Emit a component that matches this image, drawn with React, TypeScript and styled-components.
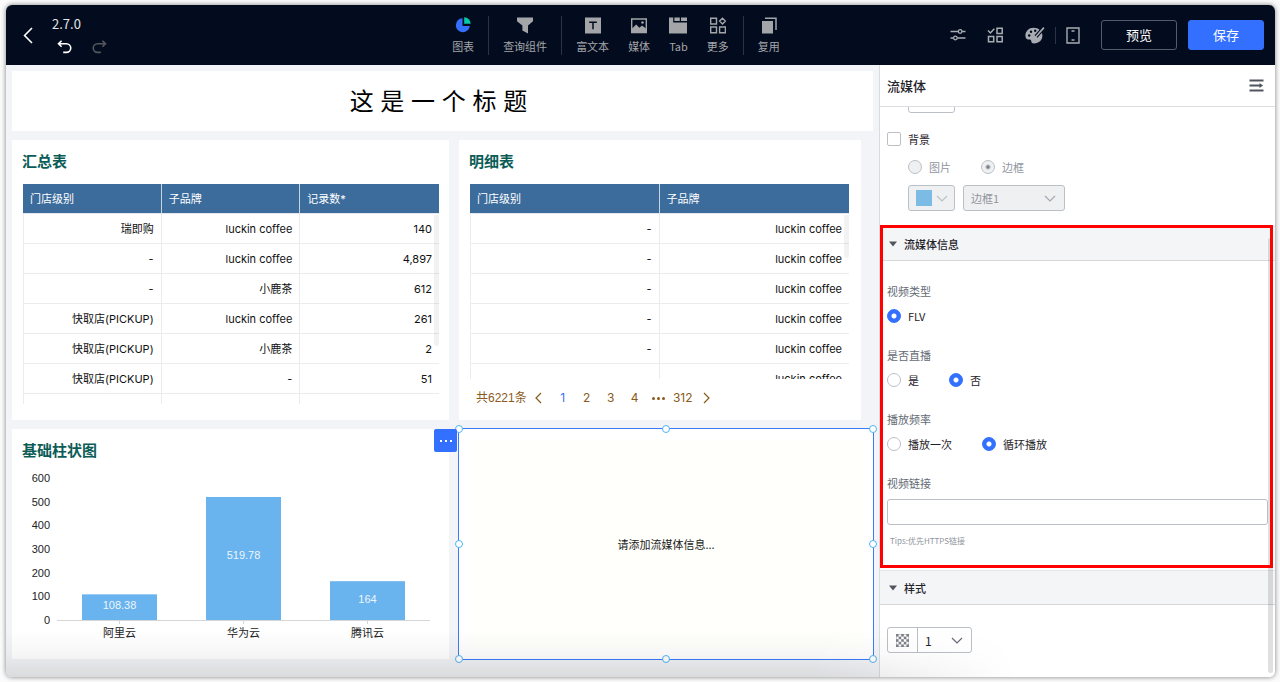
import React from 'react';
import styled, { createGlobalStyle, css } from 'styled-components';

const cjk = '"Noto Sans CJK SC", sans-serif';

const GlobalStyle = createGlobalStyle`
  * { box-sizing: border-box; }
  body { margin: 0; background: #fbfbfb; }
  body, button, input, select { font-family: ${cjk}; }
  button { padding: 0; cursor: pointer; }
`;

/* ---------- window ---------- */

const Page = styled.div`
  height: 100vh;
  min-height: 560px;
  padding: 5px 5px 5px 6px;
`;

const Window = styled.div`
  position: relative;
  display: flex;
  flex-direction: column;
  height: 100%;
  border-radius: 6px;
  overflow: hidden;
  background: #fff;
  box-shadow: 0 0 5px rgba(0, 0, 0, 0.5);

  &::after {
    content: '';
    position: absolute;
    left: 0;
    right: 260px;
    bottom: 0;
    height: 48px;
    pointer-events: none;
    background: linear-gradient(to bottom, transparent, rgba(0, 0, 0, 0.03) 50%, rgba(0, 0, 0, 0.1));
    mask-image: linear-gradient(to right, #000 80%, transparent);
  }
`;

const Body = styled.div`
  flex: 1;
  min-height: 0;
  display: flex;
`;

/* ---------- top bar ---------- */

const TopBar = styled.header`
  flex: none;
  height: 60px;
  padding: 0 11px 0 16px;
  display: grid;
  grid-template-columns: 430fr auto 484fr;
  align-items: center;
  background: #030c1e;
  color: #a3a6ab;
`;

const IconButton = styled.button<{ $color?: string }>`
  display: flex;
  align-items: center;
  justify-content: center;
  border: 0;
  background: none;
  color: ${(p) => p.$color ?? '#a9acb2'};
`;

const TopLeft = styled.div`
  display: flex;
  align-items: center;
  gap: 18px;
`;

const Version = styled.div`
  font-size: 13px;
  line-height: 20px;
  color: #e4e6ea;
`;

const History = styled.div`
  display: flex;
  gap: 20px;
  padding: 6px 5px 2px;
`;

const Tools = styled.nav`
  display: flex;
  align-items: center;
  gap: 14px;
`;

const ToolGroup = styled.div`
  display: flex;
  gap: 19px;
`;

const Tool = styled.button`
  display: flex;
  flex-direction: column;
  align-items: center;
  gap: 4px;
  padding-top: 1px;
  border: 0;
  background: none;
  color: #a3a5a9;
  font-size: 11px;
  line-height: 16px;
`;

const Divider = styled.span<{ $height: number }>`
  width: 1px;
  height: ${(p) => p.$height}px;
  background: #2b3344;
`;

const TopRight = styled.div`
  display: flex;
  align-items: center;
  justify-content: flex-end;
`;

const Utilities = styled.div`
  display: flex;
  align-items: center;
  gap: 21px;
  margin-right: 21px;
`;

const UtilityPair = styled.div`
  display: flex;
  align-items: center;
  gap: 10px;
`;

const ActionButton = styled.button<{ $primary?: boolean }>`
  width: 76px;
  height: 30px;
  margin-left: ${(p) => (p.$primary ? 11 : 0)}px;
  border: 1px solid ${(p) => (p.$primary ? '#3370ff' : '#555c69')};
  border-radius: 3px;
  background: ${(p) => (p.$primary ? '#3370ff' : 'transparent')};
  color: #fff;
  font-size: 13px;
  line-height: 26px;
`;

/* ---------- canvas ---------- */

const Canvas = styled.main`
  flex: 1;
  min-width: 0;
  overflow: hidden;
  padding: 6px;
  background: #f3f4f7;
  display: grid;
  grid-template-columns: 437fr 414fr;
  grid-template-rows: 60px 280px 230px;
  gap: 9px 10px;
`;

const TitleCard = styled.h1`
  grid-column: 1 / -1;
  display: flex;
  align-items: center;
  justify-content: center;
  margin: 0;
  padding: 2px 8px 0 0;
  background: #fff;
  color: #000;
  font: 400 24px/32px Inter, ${cjk};
`;

const Card = styled.section<{ $inset?: boolean }>`
  display: flex;
  flex-direction: column;
  min-width: 0;
  min-height: 0;
  padding: 10px ${(p) => (p.$inset ? 12 : 10)}px 0 10px;
  margin-right: ${(p) => (p.$inset ? 12 : 0)}px;
  background: #fff;
`;

const CardTitle = styled.h2`
  flex: none;
  margin: 0 0 12px;
  color: #0b5c57;
  font: 700 15px/22px ${cjk};
`;

const TableFrame = styled.div<{ $bottom: number; $thumb: number }>`
  position: relative;
  flex: 1;
  min-height: 0;
  overflow: hidden;
  margin: 0 0 ${(p) => p.$bottom}px 1px;

  &::after {
    content: '';
    position: absolute;
    top: 31px;
    right: 0;
    width: 5px;
    height: ${(p) => p.$thumb}px;
    border-radius: 0 0 3px 3px;
    background: rgba(0, 0, 0, 0.05);
  }
`;

const DataTable = styled.table`
  width: 100%;
  table-layout: fixed;
  border-collapse: separate;
  border-spacing: 0;
  font: 400 11px/16px Inter, ${cjk};
  color: #111;

  th {
    height: 30px;
    padding: 0 7px;
    text-align: left;
    font-weight: 400;
    color: #fff;
    background: #3c6c9c;
    background-clip: padding-box;
    border-right: 1px solid #c8d3e0;
    border-bottom: 1px solid #e4e8ee;
  }
  th:last-child { border-right: 0; }

  td {
    height: 30px;
    padding: 0 7px;
    text-align: right;
    border-right: 1px solid #ececee;
    border-bottom: 1px solid #ececee;
  }
  td:first-child { border-left: 1px solid #ececee; }
  td:last-child { border-right: 0; }
`;

const Pagination = styled.nav`
  flex: none;
  display: flex;
  align-items: center;
  padding: 7px 7px 10px;
  color: #8a5a1c;
  font: 400 12px/24px "Liberation Sans", ${cjk};
`;

const PageButton = styled.button<{ $active?: boolean }>`
  display: flex;
  align-items: center;
  justify-content: center;
  min-width: 24px;
  height: 24px;
  border: 0;
  background: none;
  color: ${(p) => (p.$active ? '#3370ff' : '#8a5a1c')};
  font: 400 12px/24px Inter, ${cjk};
`;

const Chart = styled.svg`
  display: block;
  width: 100%;
  margin-top: -11px;
  font-family: "Liberation Sans", ${cjk};
  font-size: 11px;
`;

const MediaCard = styled.section`
  position: relative;
  display: flex;
  padding: 11px;
  background: #fff;
`;

const MediaPlaceholder = styled.p`
  flex: 1;
  display: flex;
  align-items: center;
  justify-content: center;
  margin: 0;
  background: #fffffb;
  color: #1a1a1a;
  font-size: 11px;
`;

const Selection = styled.div`
  position: absolute;
  inset: -1px;
  border: 1px solid #3b7bfb;
`;

const Handle = styled.i<{ $x: number; $y: number }>`
  position: absolute;
  left: ${(p) => p.$x}%;
  top: ${(p) => p.$y}%;
  width: 8px;
  height: 8px;
  margin: -4px;
  border: 1px solid #52b4f2;
  border-radius: 50%;
  background: #fff;
`;

const MoreButton = styled.button`
  position: absolute;
  top: 0;
  right: 100%;
  width: 23px;
  height: 23px;
  margin-right: 2px;
  border: 0;
  border-radius: 2px;
  display: flex;
  align-items: center;
  justify-content: center;
  background: #3370ff;
  color: #fff;
`;

/* ---------- settings panel ---------- */

const Panel = styled.aside`
  position: relative;
  flex: none;
  width: 396px;
  display: flex;
  flex-direction: column;
  border-left: 1px solid #d9dbdf;
  background: #fff;
  color: #1f2329;
  font-size: 11px;
  line-height: 16px;
`;

const PanelHeader = styled.div`
  flex: none;
  height: 42px;
  padding: 0 11px 0 7px;
  display: flex;
  align-items: center;
  justify-content: space-between;
  border-bottom: 1px solid #dcdee1;
`;

const PanelTitle = styled.h2`
  margin: 0;
  font-size: 13px;
  font-weight: 500;
`;

const PanelScroll = styled.div`
  flex: 1;
  min-height: 0;
  overflow: hidden;
`;

const ScrollThumb = styled.div`
  position: absolute;
  top: 173px;
  right: 2px;
  bottom: 4px;
  width: 5px;
  border-radius: 3px;
  background: rgba(0, 0, 0, 0.12);
`;

const ClippedRow = styled.div`
  height: 6px;
  overflow: hidden;
  display: flex;
  align-items: flex-end;
  padding-left: 28px;
`;

const Background = styled.fieldset`
  margin: 0;
  border: 0;
  padding: 18px 7px 15px;
`;

const Nested = styled.div`
  display: flex;
  flex-direction: column;
  gap: 10px;
  padding: 12px 0 0 21px;
`;

const Options = styled.div<{ $gap: number }>`
  display: flex;
  gap: ${(p) => p.$gap}px;
`;

const Option = styled.label<{ $muted?: boolean }>`
  display: flex;
  align-items: center;
  gap: 7px;
  color: ${(p) => (p.$muted ? '#8f959e' : '#1f2329')};
`;

const Check = styled.input`
  appearance: none;
  width: 14px;
  height: 14px;
  margin: 0;
  border: 1px solid #bbbfc6;
  border-radius: 2px;
  background: #fff;
`;

const Radio = styled.input`
  appearance: none;
  width: 14px;
  height: 14px;
  margin: 0;
  border: 1px solid #bbbfc6;
  border-radius: 50%;
  background: #fff;

  &:checked {
    border-color: #3370ff;
    background: radial-gradient(circle, #fff 0 2px, #3370ff 3px);
  }
  &:disabled { background: #eff0f1; border-color: #bbbfc6; }
  &:disabled:checked { background: radial-gradient(circle, #7c828c 0 1px, #eff0f1 3px); }
`;

const boxed = css<{ $muted?: boolean }>`
  height: 26px;
  border: 1px solid #bbbfc6;
  border-radius: 3px;
  background: ${(p) => (p.$muted ? '#eff0f1' : '#fff')};
`;

const ColorButton = styled.button<{ $muted?: boolean }>`
  ${boxed}
  flex: none;
  width: 47px;
  display: flex;
  align-items: center;
  justify-content: center;
  gap: 4px;
  color: #bbbfc6;
`;

const Swatch = styled.span`
  width: 16px;
  height: 16px;
  background: #7cbbe4;
`;

const SelectBox = styled.div<{ $muted?: boolean; $width: number }>`
  ${boxed}
  width: ${(p) => p.$width}px;
  display: flex;
  align-items: center;
  padding-right: 8px;
  color: ${(p) => (p.$muted ? '#a3a8b0' : '#646a73')};
`;

const Select = styled.select<{ $muted?: boolean }>`
  appearance: none;
  flex: 1;
  min-width: 0;
  height: 24px;
  padding: 0 7px;
  border: 0;
  background: transparent;
  color: ${(p) => (p.$muted ? '#8f959e' : '#1f2329')};
  font-size: ${(p) => (p.$muted ? 11 : 12)}px;
  opacity: 1;
`;

const Prefix = styled.span`
  width: 30px;
  height: 24px;
  display: flex;
  align-items: center;
  justify-content: center;
  border-right: 1px solid #bbbfc6;
`;

const Section = styled.section<{ $highlighted?: boolean }>`
  position: relative;
  margin-bottom: 1px;

  ${(p) =>
    p.$highlighted &&
    css`
      &::after {
        content: '';
        position: absolute;
        z-index: 1;
        inset: -1px 2px 1px 0;
        border: 3px solid #ff0000;
        pointer-events: none;
      }
    `}
`;

const SectionTitle = styled.h3`
  margin: 0;
  height: 35px;
  padding: 0 8px;
  display: flex;
  align-items: center;
  gap: 6px;
  border-top: 1px solid #e6e7ea;
  border-bottom: 1px solid #d5d7db;
  background: #f4f5f7;
  font-size: 11px;
  font-weight: 500;
`;

const SectionBody = styled.div`
  padding: 22px 7px 20px;
`;

const Field = styled.div`
  margin-bottom: 23px;
  &:last-child { margin-bottom: 0; }
`;

const FieldLabel = styled.label`
  display: block;
  margin-bottom: 8px;
  color: #646a73;
`;

const RadioField = styled.fieldset`
  margin: 0 0 23px;
  padding: 0;
  border: 0;

  legend {
    padding: 0;
    margin-bottom: 9px;
    color: #646a73;
  }
`;

const TextInput = styled.input`
  ${boxed}
  display: block;
  width: 100%;
  padding: 0 8px;
`;

const Tip = styled.p`
  margin: 8px 3px 0;
  color: #8f959e;
  font-size: 8px;
  line-height: 16px;
`;

/* ---------- drawings ---------- */

const Chevron = ({ d = 'M1 1l5 5 5-5', w = 12, h = 7 }: { d?: string; w?: number; h?: number }) => (
  <svg width={w} height={h} viewBox={`0 0 ${w} ${h}`} fill="none" stroke="currentColor" strokeWidth="1.2" aria-hidden>
    <path d={d} />
  </svg>
);

const BackArrow = () => (
  <svg width="12" height="17" viewBox="0 0 12 17" fill="none" stroke="currentColor" strokeWidth="1.6" aria-hidden>
    <path d="M10 1L2.600 8.500l7.400 7.500" />
  </svg>
);

const Caret = () => (
  <svg width="10" height="6" viewBox="0 0 10 6" aria-hidden>
    <path d="M1 .6h8L5 5.400z" fill="#51565e" />
  </svg>
);

const UndoIcon = ({ flip = false }: { flip?: boolean }) => (
  <svg width="15" height="14" viewBox="0 0 15 14" fill="none" stroke="currentColor" strokeWidth="1.6" aria-hidden>
    <g transform={flip ? 'matrix(-1 0 0 1 15 0)' : undefined}>
      <path d="M4.6 .7L1.500 3.700l3.100 3M2 3.700h7.400a4.300 4.300 0 0 1 0 8.700H6.200" />
    </g>
  </svg>
);

const icons = {
  chart: (
    <>
      <path d="M7.5 1.2A7 7 0 1 0 14.8 9H7.5z" fill="#3370ff" />
      <path d="M9.2.3v6.5h6.5A6.6 6.6 0 0 0 9.2.3z" fill="#04c9a8" />
    </>
  ),
  filter: <path d="M0 .400h16v3.800L11 8.400v8.200l-5.600-3V8.400L0 4.200z" fill="currentColor" />,
  text: (
    <>
      <path d="M0 .500h16v16H0z" fill="currentColor" />
      <path d="M4.200 5.200h7.600M8 5.200v7" stroke="#030c1e" strokeWidth="1.500" />
    </>
  ),
  media: (
    <>
      <path d="M.7 2h14.600v13.600H.7z" fill="none" stroke="currentColor" strokeWidth="1.400" />
      <path d="M1 11.500l4.200-4 3.200 3.200 2.600-2.300 4 3v4.200H1z" fill="currentColor" />
      <circle cx="11.500" cy="5.500" r="1.300" fill="currentColor" />
    </>
  ),
  tab: <path d="M0 .500h4.200v5H18v11H0zM5.400.500h5.400v3.400H5.400zM12 .500h6v3.400h-6z" fill="currentColor" />,
  more: (
    <path
      d="M.7 1.200h5.800V7H.7zM.7 10h5.800v5.800H.7zM9.600 10h5.800v5.800H9.600zM12.500 1.200l2.900 2.900L12.500 7 9.600 4.100z"
      fill="none"
      stroke="currentColor"
      strokeWidth="1.400"
    />
  ),
  reuse: (
    <>
      <path d="M1 4h11v12.500H1z" fill="currentColor" />
      <path d="M4 1.200h11v11.800" fill="none" stroke="currentColor" strokeWidth="1.500" />
    </>
  ),
};

const ToolIcon = ({ name }: { name: keyof typeof icons }) => {
  const w = name === 'tab' ? 18 : 16;
  return (
    <svg width={w} height="17" viewBox={`0 0 ${w} 17`} aria-hidden>
      {icons[name]}
    </svg>
  );
};

const SlidersIcon = () => (
  <svg width="16" height="12" viewBox="0 0 16 12" fill="none" stroke="currentColor" strokeWidth="1.300" aria-hidden>
    <path d="M.5 2.500h7.700M12 2.500h3.500M.5 9h3M7.300 9h8.200" />
    <circle cx="10.100" cy="2.500" r="1.800" />
    <circle cx="5.400" cy="9" r="1.800" />
  </svg>
);

const TasksIcon = () => (
  <svg width="17" height="16" viewBox="0 0 17 16" fill="none" stroke="currentColor" strokeWidth="1.500" aria-hidden>
    <path d="M1 3.500L3.400 6 7.300 1.700M10 1.200h5.200v5.200H10zM1.500 9.500h5.200v5.200H1.500zM10 9.500h5.200v5.200H10z" />
  </svg>
);

const PaletteIcon = () => (
  <svg width="20" height="17" viewBox="0 0 20 17" aria-hidden>
    <path
      d="M8.600.800C4 .8.400 4.300.400 8.500c0 3 1.500 4.200 3.300 4 1.700-.2 2.500.4 2.600 1.900.1 1.300 1.200 2 2.700 2 5 0 8.400-3.400 8.400-7.900C17.400 4.200 13.500.800 8.600.800z"
      fill="currentColor"
    />
    <g fill="#030c1e">
      <circle cx="4.200" cy="8.500" r="1.200" />
      <circle cx="6" cy="4.800" r="1.200" />
      <circle cx="10.200" cy="3.700" r="1.200" />
    </g>
    <path d="M18.900.600L11 9.600" stroke="#030c1e" strokeWidth="3.800" />
    <path d="M18.900.600L11.500 9 8.300 12" stroke="currentColor" strokeWidth="1.600" fill="none" />
  </svg>
);

const PhoneIcon = () => (
  <svg width="14" height="17" viewBox="0 0 14 17" fill="none" stroke="currentColor" strokeWidth="1.400" aria-hidden>
    <path d="M1 1h12v15H1zM5.500 4h3M5.500 13h3" />
  </svg>
);

const CollapseIcon = () => (
  <svg width="15" height="13" viewBox="0 0 15 13" aria-hidden>
    <path d="M.5.500h14v2H.5zM.5 5.500H11v2H.5zM.5 10.500h14v2H.5zM10.500 4l3.600 2.500L10.500 9z" fill="#51565e" />
  </svg>
);

const CheckerIcon = () => (
  <svg width="13" height="13" viewBox="0 0 13 13" aria-hidden>
    <path d="M.5.500h12v12H.5z" fill="#fff" stroke="#a6a9ae" strokeWidth=".6" />
    {[0, 1, 2, 3, 4].map((r) =>
      [0, 1, 2, 3, 4]
        .filter((c) => (r + c) % 2 === 0)
        .map((c) => <rect key={`${r}${c}`} x={c * 2.6} y={r * 2.6} width="2.6" height="2.6" fill="#7d8087" />),
    )}
  </svg>
);

/* ---------- data ---------- */

const toolGroups: { icon: keyof typeof icons; label: string }[][] = [
  [{ icon: 'chart', label: '图表' }],
  [{ icon: 'filter', label: '查询组件' }],
  [
    { icon: 'text', label: '富文本' },
    { icon: 'media', label: '媒体' },
    { icon: 'tab', label: 'Tab' },
    { icon: 'more', label: '更多' },
  ],
  [{ icon: 'reuse', label: '复用' }],
];

const summaryRows = [
  ['瑞即购', 'luckin coffee', '140'],
  ['-', 'luckin coffee', '4,897'],
  ['-', '小鹿茶', '612'],
  ['快取店(PICKUP)', 'luckin coffee', '261'],
  ['快取店(PICKUP)', '小鹿茶', '2'],
  ['快取店(PICKUP)', '-', '51'],
  ['', '', ''],
];

const detailRows = Array.from({ length: 6 }, () => ['-', 'luckin coffee']);

const bars = [
  { name: '阿里云', value: 108.38 },
  { name: '华为云', value: 519.78 },
  { name: '腾讯云', value: 164 },
];

const Table = ({ head, rows }: { head: string[]; rows: string[][] }) => (
  <DataTable>
    <thead>
      <tr>{head.map((h) => <th key={h} scope="col">{h}</th>)}</tr>
    </thead>
    <tbody>
      {rows.map((row, i) => (
        <tr key={i}>{row.map((cell, j) => <td key={j}>{cell}</td>)}</tr>
      ))}
    </tbody>
  </DataTable>
);

const BarChart = () => {
  const base = 158;
  const scale = 142 / 600;
  return (
    <Chart viewBox="0 0 417 190" role="img" aria-label="基础柱状图">
      {[0, 100, 200, 300, 400, 500, 600].map((v) => (
        <text key={v} x="28" y={base - v * scale + 4} textAnchor="end" fill="#222">{v}</text>
      ))}
      <path d={`M35 ${base + 0.5}h373`} stroke="#d4d6d9" />
      {bars.map(({ name, value }, i) => {
        const cx = 97.5 + i * 124;
        const h = value * scale;
        return (
          <g key={name} textAnchor="middle">
            <path d={`M${cx} ${base}v4`} stroke="#d4d6d9" />
            <rect x={cx - 37.5} y={base - h} width="75" height={h} fill="#69b3ee" />
            <text x={cx} y={base - h / 2 + (h > 100 ? 1 : 2)} fill="#eef6fd">{value}</text>
            <text x={cx} y={base + 17} fill="#222">{name}</text>
          </g>
        );
      })}
    </Chart>
  );
};

const handles = [[0, 0], [50, 0], [100, 0], [0, 50], [100, 50], [0, 100], [50, 100], [100, 100]];

const RadioGroup = ({ legend, name, options, value }: { legend: string; name: string; options: string[]; value: string }) => (
  <RadioField>
    <legend>{legend}</legend>
    <Options $gap={30}>
      {options.map((o) => (
        <Option key={o}>
          <Radio type="radio" name={name} defaultChecked={o === value} />
          {o}
        </Option>
      ))}
    </Options>
  </RadioField>
);

export default function App() {
  return (
    <>
      <GlobalStyle />
      <Page>
        <Window>
          <TopBar>
            <TopLeft>
              <IconButton $color="#fff" aria-label="返回"><BackArrow /></IconButton>
              <div>
                <Version>2.7.0</Version>
                <History>
                  <IconButton $color="#fff" aria-label="撤销"><UndoIcon /></IconButton>
                  <IconButton $color="#54575d" aria-label="重做"><UndoIcon flip /></IconButton>
                </History>
              </div>
            </TopLeft>
            <Tools>
              {toolGroups.map((group, i) => (
                <React.Fragment key={i}>
                  {i > 0 && <Divider $height={39} />}
                  <ToolGroup>
                    {group.map((t) => (
                      <Tool key={t.label}>
                        <ToolIcon name={t.icon} />
                        {t.label}
                      </Tool>
                    ))}
                  </ToolGroup>
                </React.Fragment>
              ))}
            </Tools>
            <TopRight>
              <Utilities>
                <IconButton aria-label="设置"><SlidersIcon /></IconButton>
                <IconButton aria-label="任务"><TasksIcon /></IconButton>
                <UtilityPair>
                  <IconButton aria-label="主题"><PaletteIcon /></IconButton>
                  <Divider $height={17} />
                  <IconButton aria-label="移动端"><PhoneIcon /></IconButton>
                </UtilityPair>
              </Utilities>
              <ActionButton>预览</ActionButton>
              <ActionButton $primary>保存</ActionButton>
            </TopRight>
          </TopBar>

          <Body>
            <Canvas>
              <TitleCard>这 是 一 个 标 题</TitleCard>

              <Card>
                <CardTitle>汇总表</CardTitle>
                <TableFrame $bottom={16} $thumb={131}>
                  <Table head={['门店级别', '子品牌', '记录数*']} rows={summaryRows} />
                </TableFrame>
              </Card>

              <Card $inset>
                <CardTitle>明细表</CardTitle>
                <TableFrame $bottom={0} $thumb={43}>
                  <Table head={['门店级别', '子品牌']} rows={detailRows} />
                </TableFrame>
                <Pagination aria-label="分页">
                  <span>共6221条</span>
                  <PageButton aria-label="上一页"><Chevron d="M6 1L1 6l5 5" w={7} h={12} /></PageButton>
                  <PageButton $active>1</PageButton>
                  <PageButton>2</PageButton>
                  <PageButton>3</PageButton>
                  <PageButton>4</PageButton>
                  <PageButton aria-label="更多页">
                    <svg width="13" height="3" viewBox="0 0 13 3" fill="currentColor" aria-hidden>
                      <circle cx="1.500" cy="1.500" r="1.500" />
                      <circle cx="6.500" cy="1.500" r="1.500" />
                      <circle cx="11.500" cy="1.500" r="1.500" />
                    </svg>
                  </PageButton>
                  <PageButton>312</PageButton>
                  <PageButton aria-label="下一页"><Chevron d="M1 1l5 5-5 5" w={7} h={12} /></PageButton>
                </Pagination>
              </Card>

              <Card>
                <CardTitle>基础柱状图</CardTitle>
                <BarChart />
              </Card>

              <MediaCard>
                <MediaPlaceholder>请添加流媒体信息...</MediaPlaceholder>
                <Selection>
                  {handles.map(([x, y]) => <Handle key={`${x}-${y}`} $x={x} $y={y} />)}
                </Selection>
                <MoreButton aria-label="更多操作">
                  <svg width="12" height="2" viewBox="0 0 12 2" fill="currentColor" aria-hidden>
                    <path d="M0 0h2v2H0zM5 0h2v2H5zM10 0h2v2h-2z" />
                  </svg>
                </MoreButton>
              </MediaCard>
            </Canvas>

            <Panel>
              <PanelHeader>
                <PanelTitle>流媒体</PanelTitle>
                <IconButton aria-label="收起"><CollapseIcon /></IconButton>
              </PanelHeader>
              <PanelScroll>
                <ClippedRow><ColorButton aria-label="颜色" /></ClippedRow>
                <Background>
                  <Option><Check type="checkbox" />背景</Option>
                  <Nested>
                    <Options $gap={30}>
                      <Option $muted><Radio type="radio" name="bg" disabled />图片</Option>
                      <Option $muted><Radio type="radio" name="bg" disabled defaultChecked />边框</Option>
                    </Options>
                    <Options $gap={8}>
                      <ColorButton $muted disabled aria-label="边框颜色"><Swatch /><Chevron /></ColorButton>
                      <SelectBox $muted $width={102}>
                        <Select $muted disabled aria-label="边框样式"><option>边框1</option></Select>
                        <Chevron />
                      </SelectBox>
                    </Options>
                  </Nested>
                </Background>

                <Section $highlighted>
                  <SectionTitle><Caret />流媒体信息</SectionTitle>
                  <SectionBody>
                    <RadioGroup legend="视频类型" name="type" options={['FLV']} value="FLV" />
                    <RadioGroup legend="是否直播" name="live" options={['是', '否']} value="否" />
                    <RadioGroup legend="播放频率" name="loop" options={['播放一次', '循环播放']} value="循环播放" />
                    <Field>
                      <FieldLabel htmlFor="link">视频链接</FieldLabel>
                      <TextInput id="link" type="text" />
                      <Tip>Tips:优先HTTPS链接</Tip>
                    </Field>
                  </SectionBody>
                </Section>

                <Section>
                  <SectionTitle><Caret />样式</SectionTitle>
                  <SectionBody>
                    <SelectBox $width={85}>
                      <Prefix><CheckerIcon /></Prefix>
                      <Select aria-label="不透明度"><option>1</option></Select>
                      <Chevron />
                    </SelectBox>
                  </SectionBody>
                </Section>
              </PanelScroll>
              <ScrollThumb />
            </Panel>
          </Body>
        </Window>
      </Page>
    </>
  );
}
